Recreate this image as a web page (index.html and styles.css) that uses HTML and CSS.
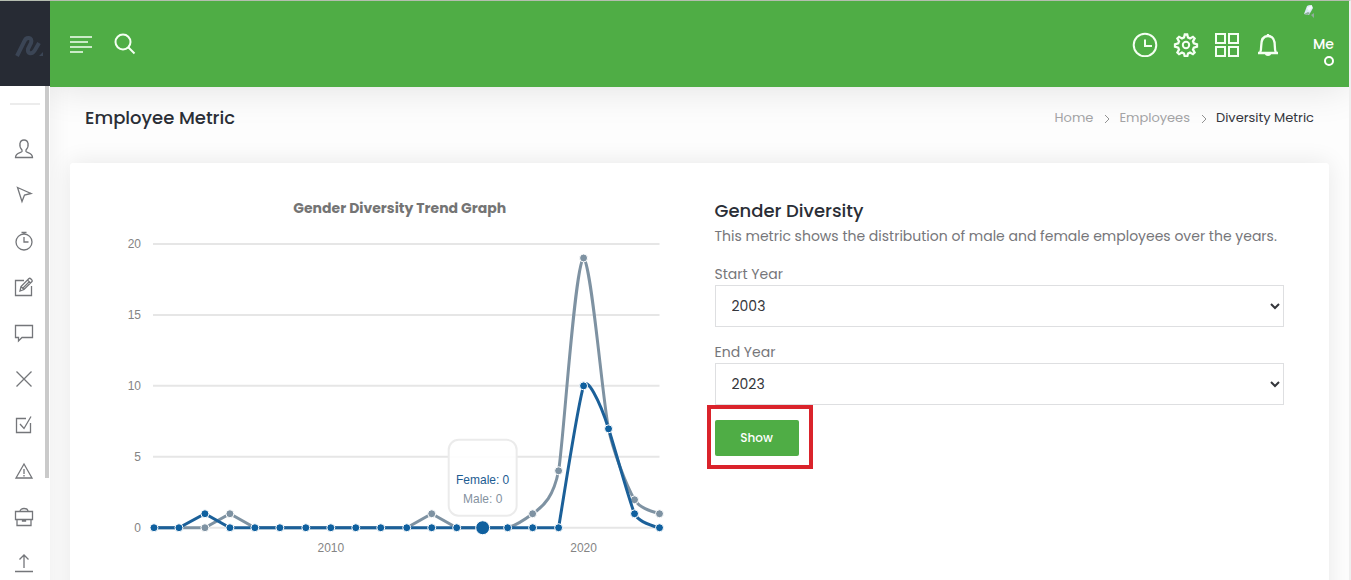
FILE: index.html
```html
<!DOCTYPE html>
<html lang="en">
<head>
<meta charset="utf-8">
<meta name="viewport" content="width=device-width, initial-scale=1">
<title>Employee Metric</title>
<link rel="stylesheet" href="styles.css">
</head>
<body>
<div class="app">
  <aside class="sidebar">
    <a class="logo" href="#" aria-label="Dashboard">
      <svg width="32" height="24" viewBox="0 0 32 24"><path class="logo-line" d="M3 22L10 8C12 2 19 3 17 9L14 15C13 20 18 21 21 16L25 9"/><path class="logo-dot" d="M29 18V22H25Z"/></svg>
    </a>
    <nav class="menu" aria-label="Main">
      <hr class="menu-rule">
      <a class="menu-item" href="#" aria-label="Profile"><svg class="icon" viewBox="0 0 20 20"><path d="M8 12.500V11C6.500 9.500 5.500 7 6 4.500c.4-2.500 1.800-3.500 4-3.500s3.600 1 4 3.500c.5 2.500-.5 5-2 6.500v1.500c1 1.500 6.500 1 6.500 6h-17c0-5 5.500-4.500 6.500-6z"/></svg></a>
      <a class="menu-item" href="#" aria-label="Location"><svg class="icon" viewBox="0 0 20 20"><path d="M3.500 2.500L17 8.500l-6.500 1.500L8 16.500z"/></svg></a>
      <a class="menu-item" href="#" aria-label="Time"><svg class="icon" viewBox="0 0 20 20"><circle cx="10" cy="11" r="8"/><path d="M10 6v5h4.500M7.500 1.500h5M10 1.500V3"/></svg></a>
      <a class="menu-item" href="#" aria-label="Edit"><svg class="icon" viewBox="0 0 20 20"><path d="M10 3.500H1.500v15h16V9M6 14l1-4.500 8-8c1-1 4 2 3 3l-8 8zM7 9.500l3 3M13.500 3l3 3M9 11l6.500-6.500"/></svg></a>
      <a class="menu-item" href="#" aria-label="Messages"><svg class="icon" viewBox="0 0 20 20"><path d="M1.500 2.500h17v12H8l-3.500 3.500v-3.500h-3z"/></svg></a>
      <a class="menu-item" href="#" aria-label="Close"><svg class="icon" viewBox="0 0 20 20"><path d="M2.500 2.500l15 15m0-15l-15 15"/></svg></a>
      <a class="menu-item" href="#" aria-label="Tasks"><svg class="icon" viewBox="0 0 20 20"><path d="M12 3.500H2.500v14h14V8M6 9l4 4.500L17 1.500"/></svg></a>
      <a class="menu-item" href="#" aria-label="Alerts"><svg class="icon" viewBox="0 0 20 20"><path d="M10 3l8 14H2zM10 8v5M10 14v1.500"/></svg></a>
      <a class="menu-item" href="#" aria-label="Work"><svg class="icon" viewBox="0 0 20 20"><path d="M1.500 4.500h17v8h-17zM3 12.500v6h14v-6M6 4.500c0-4 8-4 8 0M8.500 12.500V14h3v-1.500"/></svg></a>
      <a class="menu-item" href="#" aria-label="Upload"><svg class="icon" viewBox="0 0 20 20"><path d="M1 18.500h18M10 15V2M5.500 6.500L10 2l4.500 4.500"/></svg></a>
    </nav>
    <div class="scroll-thumb"></div>
  </aside>

  <div class="content">
    <header class="topbar">
      <div class="tools tools-start">
        <button class="tool" type="button" aria-label="Toggle menu"><svg width="22" height="18" viewBox="0 0 22 18"><path d="M0 2h22M0 7h18M0 12h22M0 17h13" stroke-width="1.500"/></svg></button>
        <button class="tool" type="button" aria-label="Search"><svg width="22" height="22" viewBox="0 0 22 22"><circle cx="9" cy="9" r="7.500"/><path d="M14.500 14.500l6 6"/></svg></button>
      </div>
      <div class="tools tools-end">
        <button class="tool" type="button" aria-label="History"><svg width="26" height="26" viewBox="0 0 26 26"><circle cx="13" cy="14" r="11.300"/><path d="M13 8.500v6.500h7"/></svg></button>
        <button class="tool" type="button" aria-label="Settings"><svg width="26" height="26" viewBox="0 0 26 26"><path class="heavy" d="M11.800 3.500h2.400l.8 3 2 .9 2.900-1.600 1.700 1.700-1.600 2.900.8 2 3.200.9v2.400l-3.200.9-.8 2 1.600 2.900-1.700 1.700-2.900-1.600-2 .9-.8 3h-2.400l-.8-3-2-.9-2.900 1.600-1.700-1.700 1.600-2.900-.8-2-3.200-.9v-2.400l3.200-.9.8-2-1.600-2.900 1.700-1.700 2.900 1.600 2-.9z"/><circle cx="13" cy="14" r="3.200"/></svg></button>
        <button class="tool" type="button" aria-label="Apps"><svg width="26" height="26" viewBox="0 0 26 26"><path d="M2 3h9v9H2zM15 3h9v9h-9zM2 16h9v9H2zM15 16h9v9h-9z"/></svg></button>
        <button class="tool" type="button" aria-label="Notifications"><svg width="26" height="26" viewBox="0 0 26 26"><path class="heavy" d="M3 22h20M5 22c1-2 1.200-3 1.200-7C6.200 8 9 5 13 5s6.800 3 6.800 10c0 4 .2 5 1.200 7M13 3v2"/><path class="fill" d="M10 23h6c0 2.500-6 2.500-6 0z"/></svg></button>
        <a class="user" href="#">
          <svg class="avatar" width="12" height="16" viewBox="0 0 12 16"><path fill="#dce9f7" d="M0 12L3 4Q8 1 9 6L5 13z"/><path fill="#8fae9c" d="M0 12l4-2 2 1-2 2zM7 13l3-2v5z"/><path fill="#f5faff" d="M3 6l5-3v3l-3 3z"/></svg>
          <span>Me</span>
          <i class="ring"></i>
        </a>
      </div>
    </header>

    <main>
      <div class="page-head">
        <h1>Employee Metric</h1>
        <nav class="crumbs" aria-label="Breadcrumb">
          <a href="#">Home</a>
          <svg class="chevron" viewBox="0 0 5 9"><path d="M0 1l4 4-4 4"/></svg>
          <a href="#">Employees</a>
          <svg class="chevron" viewBox="0 0 5 9"><path d="M0 1l4 4-4 4"/></svg>
          <span class="current">Diversity Metric</span>
        </nav>
      </div>

      <section class="card">
        <div class="chart-col">
          <h2 class="chart-title">Gender Diversity Trend Graph</h2>
          <svg class="chart" viewBox="0 0 570 340" role="img" aria-label="Gender diversity by year">
            <path class="grid" d="M38 14H545M38 85H545M38 156H545M38 227H545M38 298H545"/>
            <g class="axis axis-y">
              <text x="26" y="18">20</text><text x="26" y="89">15</text><text x="26" y="160">10</text><text x="26" y="231">5</text><text x="26" y="302">0</text>
            </g>
            <g class="axis axis-x"><text x="216" y="322">2010</text><text x="469" y="322">2020</text></g>
            <path class="line male" d="M39 298H90L115 284L140 298H292L317 284L342 298H393C401 296 410 290 418 284C430 276 439 266 444 241C449 212 460 35 469 28C477 35 488 170 494 199C498 220 512 256 520 270C525 278 535 281 545 284"/>
            <g class="dots male">
              <circle cx="90" cy="298" r="4"/><circle cx="115" cy="284" r="4"/><circle cx="317" cy="284" r="4"/><circle cx="418" cy="284" r="4"/><circle cx="444" cy="241" r="4"/><circle cx="469" cy="28" r="4"/><circle cx="520" cy="270" r="4"/><circle cx="545" cy="284" r="4"/>
            </g>
            <path class="line female" d="M39 298H64L90 284L115 298H444C450 262 463 176 469 156C472 146 485 170 494 199C502 224 514 269 520 284C524 292 537 296 545 298"/>
            <g class="dots female">
              <circle cx="39" cy="298" r="4"/><circle cx="64" cy="298" r="4"/><circle cx="90" cy="284" r="4"/><circle cx="115" cy="298" r="4"/><circle cx="140" cy="298" r="4"/><circle cx="165" cy="298" r="4"/><circle cx="191" cy="298" r="4"/><circle cx="216" cy="298" r="4"/><circle cx="241" cy="298" r="4"/><circle cx="266" cy="298" r="4"/><circle cx="292" cy="298" r="4"/><circle cx="317" cy="298" r="4"/><circle cx="342" cy="298" r="4"/><circle cx="368" cy="298" r="7"/><circle cx="393" cy="298" r="4"/><circle cx="418" cy="298" r="4"/><circle cx="444" cy="298" r="4"/><circle cx="469" cy="156" r="4"/><circle cx="494" cy="199" r="4"/><circle cx="520" cy="284" r="4"/><circle cx="545" cy="298" r="4"/>
            </g>
            <rect class="tip" x="334" y="210" width="68" height="76" rx="10"/>
            <text class="tip-text female" x="368" y="254">Female: 0</text>
            <text class="tip-text male" x="368" y="273">Male: 0</text>
          </svg>
        </div>

        <form class="filter">
          <h2>Gender Diversity</h2>
          <p>This metric shows the distribution of male and female employees over the years.</p>
          <div class="field">
            <label for="start">Start Year</label>
            <select id="start"><option>2003</option></select>
          </div>
          <div class="field">
            <label for="end">End Year</label>
            <select id="end"><option>2023</option></select>
          </div>
          <div class="highlight"><button class="show" type="button">Show</button></div>
        </form>
      </section>
    </main>
  </div>
</div>
</body>
</html>
```

FILE: styles.css
```css
* { box-sizing: border-box; }

body {
  margin: 0;
  height: 100vh;
  overflow: hidden;
  background: #fdfdfd;
  color: #76767a;
  font: 14px/20px Poppins, Inter, sans-serif;
}

h1, h2, p { margin: 0; font-weight: 400; }
a { color: inherit; text-decoration: none; }
button { font: inherit; cursor: pointer; }

.app {
  display: grid;
  grid-template-columns: 50px 1fr;
  height: 100%;
  border-top: 1px solid #b5bdb0;
  border-right: 2px solid #efefef;
}

.sidebar { position: relative; overflow: hidden; background: #fff; }
.logo {
  display: flex;
  align-items: center;
  justify-content: flex-end;
  height: 85px;
  padding: 4px 4px 0 0;
  background: #272b34;
}
.logo-line { fill: none; stroke: #3b4555; stroke-width: 4; }
.logo-dot { fill: #3b4555; }
.menu { display: flex; flex-direction: column; width: 48px; }
.menu-rule { width: 30px; height: 2px; margin: 17px 0 21px 10px; border: 0; background: #ececec; }
.menu-item { display: flex; align-items: center; justify-content: center; height: 46px; }
.icon { width: 20px; height: 20px; fill: none; stroke: #74767a; stroke-width: 1.3; }
.scroll-thumb {
  position: absolute;
  top: 85px;
  right: 1px;
  width: 4px;
  height: 392px;
  background: #cacaca;
}

.content { min-width: 0; overflow: hidden; }
.topbar {
  display: flex;
  align-items: center;
  justify-content: space-between;
  height: 86px;
  padding: 0 15px 0 20px;
  background: #4fad45;
  color: #fff;
  box-shadow: 0 0 40px rgba(0, 0, 0, 0.12);
}
.tools { display: flex; align-items: center; }
.tools-start { gap: 22px; }
.tools-end { gap: 15px; }
.tool { display: flex; padding: 0; border: 0; background: none; }
.tool svg { fill: none; stroke: #f4fff2; stroke-width: 2; }
.tool .fill { fill: #f4fff2; stroke: none; }
.tool .heavy { stroke-width: 2.3; }
.user {
  display: flex;
  flex-direction: column;
  align-items: flex-end;
  width: 38px;
  height: 84px;
  font-weight: 500;
}
.avatar { align-self: flex-start; margin: 0 0 16px 8px; }
.ring { width: 10px; height: 10px; margin-top: 2px; border: 2px solid #fff; border-radius: 50%; }

main { padding: 0 20px; box-shadow: inset 20px 0 20px -16px rgba(0, 0, 0, 0.05); }
.page-head {
  display: flex;
  align-items: center;
  justify-content: space-between;
  height: 76px;
  padding: 0 15px 14px;
}
h1, .filter h2 { color: #2a2e36; font-size: 18px; font-weight: 500; line-height: 24px; }
.crumbs { display: flex; align-items: center; gap: 9px; color: #a3a3a5; font-size: 13px; }
.crumbs .current { color: #34363d; }
.chevron { width: 5px; height: 9px; margin-left: 3px; fill: none; stroke: #929292; }

.card {
  display: grid;
  grid-template-columns: 1fr 1fr;
  gap: 30px;
  min-height: 500px;
  padding: 35px 45px;
  border-radius: 3px;
  background: #fff;
  box-shadow: 0 0 24px rgba(0, 0, 0, 0.09);
}
.chart-title { color: #747474; font-size: 14px; font-weight: 700; line-height: 20px; text-align: center; }
.chart { display: block; width: 100%; margin-top: 12px; }
.grid { fill: none; stroke: #e6e6e6; stroke-width: 2; }
.axis, .tip-text { font: 12px "Liberation Sans", Arial, sans-serif; fill: #848484; }
.axis-y { text-anchor: end; }
.axis-x, .tip-text { text-anchor: middle; }
.line { fill: none; stroke-width: 3; }
.line.male { stroke: #7e92a2; }
.line.female { stroke: #1b6099; }
.dots { stroke: #fff; stroke-width: 1; }
.dots.male { fill: #7e92a2; }
.dots.female { fill: #0f609f; }
.tip { fill: #fff; fill-opacity: 0.9; stroke: #ebebeb; stroke-width: 2; }
.tip-text.female { fill: #1d5c92; }
.tip-text.male { fill: #85929f; }

.filter h2 { margin-bottom: 2px; line-height: 26px; }
.filter p { margin-bottom: 18px; }
.field { display: flex; flex-direction: column; gap: 1px; margin-bottom: 15px; }
.field select {
  height: 42px;
  padding: 0 0 0 12px;
  border: 1px solid #dedfe1;
  border-radius: 0;
  background: #fff;
  color: #34363b;
  font: inherit;
}
.highlight {
  width: fit-content;
  margin: -15px 0 0 -8px;
  padding: 11px 10px 9px 4px;
  border: 4px solid #da232b;
}
.show {
  display: block;
  width: 84px;
  height: 36px;
  border: 0;
  border-radius: 2px;
  background: #4fad45;
  color: #fff;
  font-size: 12px;
  font-weight: 500;
}
```
